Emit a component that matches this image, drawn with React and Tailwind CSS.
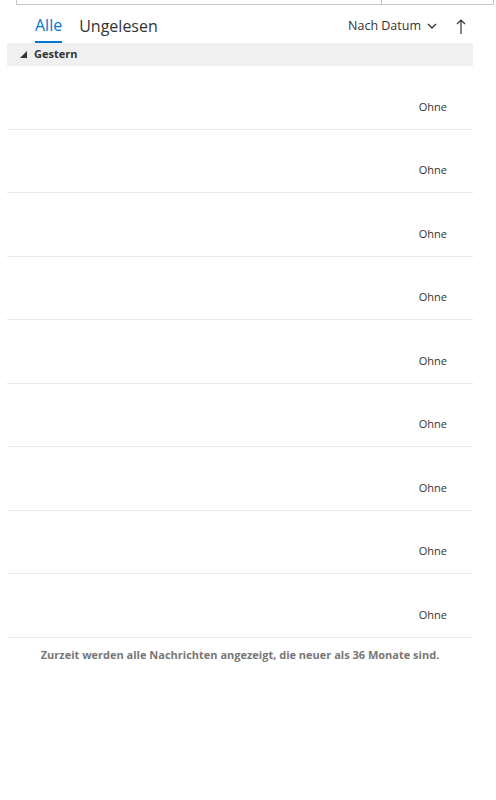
const rows = Array.from({ length: 9 }, (_, i) => i);

export default function App() {
  return (
    <div className="w-[496px] h-[800px] bg-white relative overflow-hidden" style={{ fontFamily: '"Open Sans", "Noto Sans", sans-serif' }}>
      {/* search box edge */}
      <div className="ml-[16px] w-[478px] h-[5px] border border-t-0 border-[#c6c6cc] flex">
        <div className="flex-1 border-r border-[#c6c6cc]" />
        <div className="w-[111px]" />
      </div>

      {/* tabs + sort */}
      <div className="flex items-end h-[38px] pl-[35px] pr-[30px]">
        <div className="flex items-end gap-[17px]">
          <div className="relative pb-[6px]">
            <span className="text-[16px] leading-[22px] text-[#0078d4]">Alle</span>
            <div className="absolute left-0 right-0 bottom-0 h-[2px] bg-[#0078d4]" />
          </div>
          <span className="pb-[6px] text-[16px] leading-[22px] text-[#333]">Ungelesen</span>
        </div>
        <div className="ml-auto flex items-center pb-[7px]">
          <span className="text-[12.5px] leading-[20px] text-[#333]">Nach Datum</span>
          <svg className="ml-[6px]" width="10" height="6" viewBox="0 0 10 6" fill="none" stroke="#333" strokeWidth="1.3">
            <path d="M1 1l4 4 4-4" />
          </svg>
          <svg className="ml-[19px]" width="10" height="15" viewBox="0 0 10 15" fill="none" stroke="#333" strokeWidth="1.2">
            <path d="M5 1v14M1 5l4-4 4 4" />
          </svg>
        </div>
      </div>

      {/* list */}
      <div className="ml-[7px] w-[466px]">
        <div className="h-[23px] bg-[#f0f0f0] flex items-center pl-[13px]">
          <svg width="7" height="7" viewBox="0 0 7 7">
            <path d="M7 0V7H0Z" fill="#333" />
          </svg>
          <span className="ml-[7px] text-[11px] font-bold text-[#333]">Gestern</span>
        </div>
        {rows.map((i) => (
          <div key={i} className="h-[63.5px] border-b border-[#e8e8e8] flex items-center justify-end pr-[26px] pt-[19px]">
            <span className="text-[11px] text-[#333]">Ohne</span>
          </div>
        ))}
        <div className="pt-[9px] text-center text-[11px] font-bold text-[#777]">
          Zurzeit werden alle Nachrichten angezeigt, die neuer als 36 Monate sind.
        </div>
      </div>
    </div>
  );
}
